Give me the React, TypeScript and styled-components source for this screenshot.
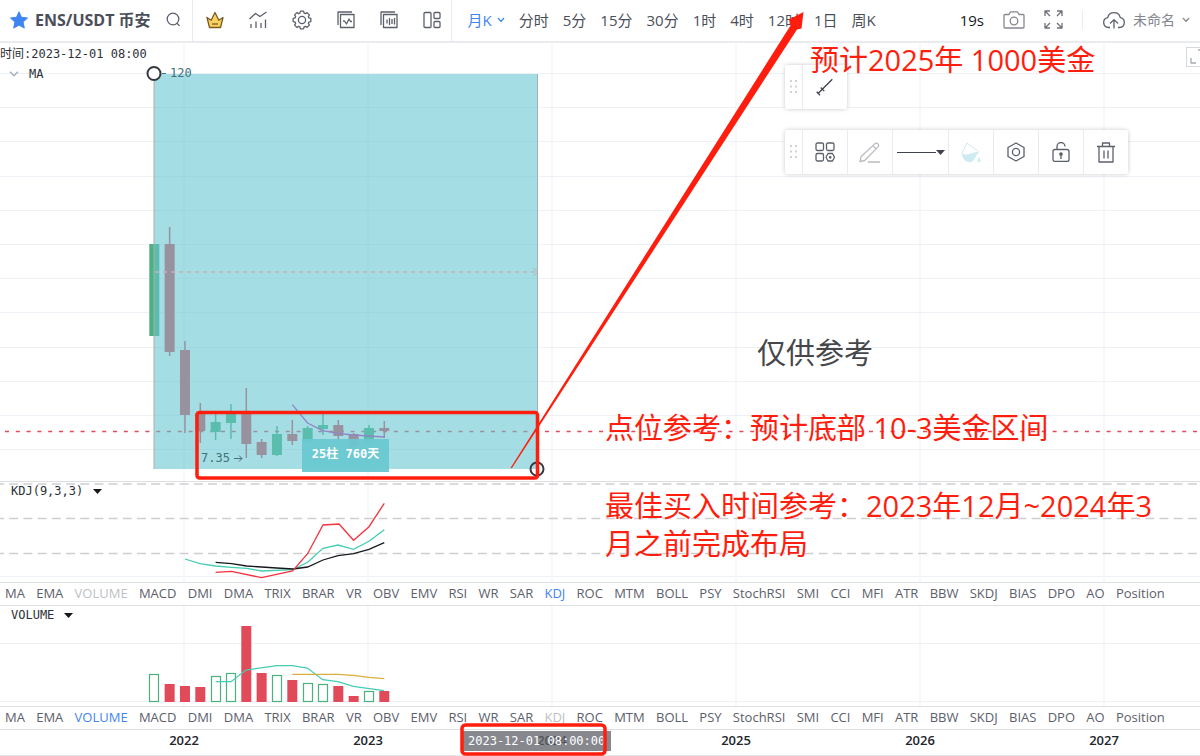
import React from 'react';
import styled, { createGlobalStyle } from 'styled-components';

const sans = `'Open Sans', 'Noto Sans', 'Noto Sans CJK SC', sans-serif`;
const mono = `'DejaVu Sans Mono', 'Noto Sans CJK SC', monospace`;

const GlobalStyle = createGlobalStyle`
  *, *::before, *::after { box-sizing: border-box; }
  body { margin: 0; background: #fff; color: #4a4e59; font-family: ${sans}; overflow-x: hidden; }
  button { font: inherit; color: inherit; background: none; border: 0; padding: 0; margin: 0; cursor: pointer; white-space: nowrap; }
  svg { display: block; }
`;

const Page = styled.div`
  position: relative;
  display: flex;
  flex-direction: column;
  min-height: 100vh;
  overflow: hidden;
`;

const Header = styled.header`
  display: flex;
  align-items: stretch;
  height: 43px;
  border-bottom: 2px solid #e9ebee;
  background: #fff;
`;

const SymbolGroup = styled.div`
  display: flex;
  align-items: center;
  gap: 7px;
  padding: 0 11px 2px 10px;
  border-right: 1px solid #e9ebee;
`;

const SymbolName = styled.button`
  font-size: 16px;
  font-weight: 700;
  line-height: 24px;
`;

const SearchButton = styled.button`
  margin-left: 8px;
`;

const ToolGroup = styled.div`
  display: flex;
  align-items: center;
  gap: 25px;
  padding: 0 10px 2px 13px;
  border-right: 1px solid #e9ebee;
`;

const Periods = styled.nav`
  display: flex;
  align-items: center;
  gap: 14px;
  padding: 0 0 2px 16px;
`;

const Period = styled.button<{ $active?: boolean }>`
  display: flex;
  align-items: center;
  gap: 5px;
  font-size: 15px;
  line-height: 22px;
  color: ${(p) => (p.$active ? '#3f85f2' : '#4a4e59')};
`;

const HeaderEnd = styled.div`
  display: flex;
  align-items: center;
  gap: 19px;
  margin-left: auto;
  padding: 0 10px 2px 0;
`;

const Countdown = styled.span`
  font-size: 15px;
  line-height: 22px;
  color: #16181d;
`;

const Divider = styled.span`
  width: 1px;
  height: 18px;
  background: #e9ebee;
`;

const LayoutName = styled.button`
  display: flex;
  align-items: center;
  gap: 7px;
  font-size: 14px;
  line-height: 22px;
  color: #85888f;
`;

const Pane = styled.section<{ $height: number; $grow?: boolean; $line?: boolean }>`
  position: relative;
  flex: ${(p) => (p.$grow ? '1 0 auto' : '0 0 auto')};
  height: ${(p) => p.$height}px;
  overflow: hidden;
  border-bottom: ${(p) => (p.$line ? '1px solid #dcdfe3' : '0')};
`;

const Plot = styled.svg`
  position: absolute;
  inset: 0;
  width: 100%;
  height: 100%;
`;

const PaneHead = styled.div<{ $inset?: boolean }>`
  position: relative;
  display: flex;
  flex-direction: column;
  align-items: flex-start;
  padding: ${(p) => (p.$inset ? '1px 11px' : '1px 0')};
  font-family: ${mono};
  font-size: 12px;
  line-height: 20px;
  color: #2c3038;
`;

const Legend = styled.button<{ $indent?: boolean }>`
  display: flex;
  align-items: center;
  gap: 10px;
  height: ${(p) => (p.$indent ? 20 : 16)}px;
  padding-left: ${(p) => (p.$indent ? 9 : 0)}px;
`;

const Tabs = styled.nav`
  display: flex;
  align-items: center;
  justify-content: space-between;
  gap: 8px;
  height: 24px;
  padding: 0 35px 2px 5px;
  border-top: 1px solid #dcdfe3;
  border-bottom: 1px solid #dcdfe3;
  background: #fff;
  overflow: hidden;
`;

const Tab = styled.button<{ $state?: string }>`
  font-size: 13px;
  line-height: 20px;
  color: ${(p) => (p.$state === 'on' ? '#3f85f2' : p.$state === 'off' ? '#bdbfc3' : '#5c606b')};
`;

const Axis = styled.footer`
  position: relative;
  display: flex;
  height: 26px;
  padding-left: 92px;
  border-bottom: 1px solid #e4e6ea;
  overflow: hidden;
`;

const Year = styled.span`
  flex: 0 0 184px;
  text-align: center;
  font-size: 13px;
  font-weight: 600;
  line-height: 20px;
  color: #22252c;
`;

const TimeTip = styled.span`
  position: absolute;
  left: 462px;
  top: 1px;
  padding: 0 6px;
  font-family: ${mono};
  font-size: 12px;
  line-height: 20px;
  color: #fff;
  background: rgba(96, 99, 107, 0.76);
`;

const Floating = styled.div<{ $top: number }>`
  position: absolute;
  left: 785px;
  top: ${(p) => p.$top}px;
  display: flex;
  height: 44px;
  background: #fff;
  border-radius: 2px;
  box-shadow: 0 0 4px rgba(0, 0, 0, 0.22);
`;

const Grip = styled.span`
  display: flex;
  align-items: center;
  justify-content: center;
  width: 17px;
`;

const Cell = styled.button<{ $wide?: boolean }>`
  display: flex;
  align-items: center;
  justify-content: center;
  width: ${(p) => (p.$wide ? 56 : 45)}px;
  border-left: 1px solid #e9ebee;
`;

const CornerButton = styled.button`
  position: absolute;
  top: 4px;
  right: -6px;
  width: 20px;
  height: 20px;
  border: 1px solid #d5dae1;
`;

const SpanLabel = styled.div`
  position: absolute;
  left: 302px;
  top: 396px;
  width: 87px;
  height: 33px;
  background: rgba(106, 199, 209, 0.95);
  color: #fff;
  font-family: ${mono};
  font-size: 12px;
  font-weight: 700;
  line-height: 30px;
  text-align: center;
`;

const PriceMark = styled.span<{ $left: number; $top: number }>`
  position: absolute;
  left: ${(p) => p.$left}px;
  top: ${(p) => p.$top}px;
  font-family: ${mono};
  font-size: 12px;
  line-height: 16px;
  color: #42707b;
`;

const Markup = styled.div`
  position: absolute;
  inset: 0;
  pointer-events: none;
`;

const Note = styled.p<{ $left: number; $top: number; $dark?: boolean }>`
  position: absolute;
  left: ${(p) => p.$left}px;
  top: ${(p) => p.$top}px;
  margin: 0;
  white-space: nowrap;
  font-size: 29px;
  line-height: 38px;
  color: ${(p) => (p.$dark ? '#45474b' : '#ff1d0d')};
`;

const RED = '#e04a59';
const GREEN = '#4bb17f';
const STEP = 46 / 3;
const barX = (i: number) => 154.3 + i * STEP;

// [up, high, low, top of body, bottom of body]
const candles: [boolean, number, number, number, number][] = [
  [true, 244, 336, 244, 336],
  [false, 227, 356, 244, 352],
  [false, 341, 433, 350, 415],
  [false, 403, 443, 413, 431],
  [true, 413, 440, 422, 432],
  [true, 404, 439, 413, 423],
  [false, 388, 458, 414, 444],
  [false, 439, 458, 442, 455],
  [true, 426, 456, 434, 455],
  [false, 420, 445, 434, 441],
  [true, 426, 444, 428, 442],
  [true, 414, 435, 425, 429],
  [false, 420, 441, 425, 436],
  [false, 433, 448, 434, 447],
  [true, 425, 446, 428, 442],
  [false, 421, 438, 428, 431],
];

// [up, top of bar]
const volumes: [boolean, number][] = [
  [true, 674], [false, 684], [false, 686], [false, 687],
  [true, 676], [true, 673], [false, 626], [false, 673],
  [true, 675], [false, 680], [true, 683], [true, 684],
  [false, 686], [false, 696], [true, 691], [false, 691],
];

const indicators = [
  'MA', 'EMA', 'VOLUME', 'MACD', 'DMI', 'DMA', 'TRIX', 'BRAR', 'VR', 'OBV', 'EMV', 'RSI', 'WR', 'SAR', 'KDJ',
  'ROC', 'MTM', 'BOLL', 'PSY', 'StochRSI', 'SMI', 'CCI', 'MFI', 'ATR', 'BBW', 'SKDJ', 'BIAS', 'DPO', 'AO', 'Position',
];

const periods = ['分时', '5分', '15分', '30分', '1时', '4时', '12时', '1日', '周K'];
const years = [2022, 2023, 2024, 2025, 2026, 2027];

const Icon = ({ w = 18, h = 18, color = '#5c606b', children }: { w?: number; h?: number; color?: string; children: React.ReactNode }) => (
  <svg width={w} height={h} viewBox={`0 0 ${w} ${h}`} fill="none" stroke={color} strokeWidth="1.3" strokeLinejoin="round" aria-hidden="true">
    {children}
  </svg>
);

const Chevron = ({ color = '#5c606b', wide }: { color?: string; wide?: boolean }) => (
  wide
    ? <Icon w={10} h={6} color={color}><path d="M1 .8l4 4 4-4" /></Icon>
    : <Icon w={8} h={6} color={color}><path d="M1 1l3 3.4L7 1" /></Icon>
);

const Caret = () => (
  <svg width="9" height="5" viewBox="0 0 9 5" aria-hidden="true"><path d="M0 0h9L4.500 5z" fill="#16181d" /></svg>
);

const Dots = () => (
  <svg width="8" height="14" viewBox="0 0 8 14" fill="#cfd2d7" aria-hidden="true">
    {[0, 5.5, 11].map((y) => [0, 5].map((x) => <rect key={`${x}-${y}`} x={x} y={y} width="2" height="2" />))}
  </svg>
);

const VerticalGrid = () => (
  <g stroke="#eef1f5">
    {years.map((y, i) => <line key={y} x1={184 + i * 184} x2={184 + i * 184} y1="0" y2="100%" />)}
  </g>
);

const Hexagon = () => (
  <Icon w={20} h={20}>
    <path d="M10 1l8 4.500v9L10 19l-8-4.500v-9z" />
    <circle cx="10" cy="10" r="3.600" />
  </Icon>
);

const Gear = () => {
  const points: string[] = [];
  for (let i = 0; i < 8; i += 1) {
    const spots: [number, number][] = [[-17, 7.2], [-10, 9], [10, 9], [17, 7.2]];
    spots.forEach(([offset, radius]) => {
      const a = ((i * 45 + offset) * Math.PI) / 180;
      points.push(`${(10 + radius * Math.sin(a)).toFixed(2)},${(10 - radius * Math.cos(a)).toFixed(2)}`);
    });
  }
  return (
    <Icon w={20} h={20}>
      <polygon points={points.join(' ')} />
      <circle cx="10" cy="10" r="3.600" />
    </Icon>
  );
};

const IndicatorTabs = ({ on, off, label }: { on: string; off: string; label: string }) => (
  <Tabs aria-label={label}>
    {indicators.map((name) => (
      <Tab key={name} $state={name === on ? 'on' : name === off ? 'off' : undefined}>{name}</Tab>
    ))}
  </Tabs>
);

const TopBar = () => (
  <Header>
    <SymbolGroup>
      <svg width="18" height="18" viewBox="0 0 18 18" aria-hidden="true">
        <path d="M9 .8l2.500 5.500 6 .7-4.400 4.100 1.200 6L9 14.100l-5.300 3 1.200-6L.5 7l6-.7z" fill="#3f85f2" stroke="#3f85f2" strokeLinejoin="round" />
      </svg>
      <SymbolName>ENS/USDT 币安</SymbolName>
      <SearchButton aria-label="搜索">
        <Icon w={15} h={15}><circle cx="7" cy="7" r="5.800" /><path d="M11 11.300l2.600 2.600" /></Icon>
      </SearchButton>
    </SymbolGroup>
    <ToolGroup>
      <button aria-label="会员">
        <Icon color="#7a5a22">
          <path d="M3.500 16.500L1 6.500l4.200 2.700L9 1.500l3.800 7.700L17 6.500l-2.500 10z" fill="#fbd25f" />
          <path d="M6 13h6" />
        </Icon>
      </button>
      <button aria-label="指标">
        <Icon><path d="M.5 8L6.500 2.500l4.500 3L17.500 1M2 17v-4M7 17v-6.500M12 17v-5M16.500 17V8.500" /></Icon>
      </button>
      <button aria-label="设置"><Gear /></button>
      <button aria-label="图表">
        <Icon><path d="M1 14V1h14M3.500 3.500h13.500v13H3.500zM6 10h1.500l2 3 2.500-5 1.500 2.500H15" /></Icon>
      </button>
      <button aria-label="统计">
        <Icon><path d="M1 14V1h14M3.500 3.500h13.500v13H3.500zM7 8.500v4M9.500 7v7M12 8v5M14.500 7v6.500" /></Icon>
      </button>
      <button aria-label="布局">
        <Icon><rect x="1" y="1.500" width="7" height="15" rx="1" /><rect x="11" y="1.500" width="6" height="6" rx="1" /><rect x="11" y="10.500" width="6" height="6" rx="1" /></Icon>
      </button>
    </ToolGroup>
    <Periods aria-label="周期">
      <Period $active>月K<Chevron color="#3f85f2" /></Period>
      {periods.map((p) => <Period key={p}>{p}</Period>)}
    </Periods>
    <HeaderEnd>
      <Countdown>19s</Countdown>
      <button aria-label="截图">
        <Icon w={22} h={18} color="#85888f">
          <path d="M1 4.500q0-1 1-1h4l1.500-2.700h7L16 3.500h4q1 0 1 1V16q0 1-1 1H2q-1 0-1-1z" /><circle cx="11" cy="10" r="3.800" />
        </Icon>
      </button>
      <button aria-label="全屏">
        <Icon w={19} h={19} color="#6d7078">
          <path d="M6 1H1v5M1 1l5 5M13 1h5v5M18 1l-5 5M1 13v5h5M1 18l5-5M18 13v5h-5M18 18l-5-5" />
        </Icon>
      </button>
      <Divider />
      <LayoutName>
        <Icon w={24} h={18}>
          <path d="M8 16.500H6.500a5 5 0 0 1-.8-9.900 6.500 6.500 0 0 1 12.600 0 5 5 0 0 1-.8 9.900H16M12 17.500V9M8 12.500L12 8.600l4 3.900" />
        </Icon>
        未命名
        <Chevron color="#85888f" />
      </LayoutName>
    </HeaderEnd>
  </Header>
);

const PricePane = () => (
  <Pane $height={439} $grow $line>
    <Plot>
      <g transform="translate(0 -43)">
        <g stroke="#eef1f5">
          {Array.from({ length: 12 }, (_, i) => {
            const y = Math.round(73 + i * 34.200) + 0.5;
            return <line key={i} x1="0" x2="100%" y1={y} y2={y} />;
          })}
        </g>
      </g>
      <VerticalGrid />
      <g transform="translate(0 -43)">
        <line x1="5" x2="100%" y1="431.500" y2="431.500" stroke="#e04a59" strokeWidth="1.500" strokeDasharray="4 6.800" />
        {candles.map(([up, high, low, top, bottom], i) => (
          <g key={i} fill={up ? GREEN : RED}>
            <rect x={barX(i) - 0.75} y={high} width="1.500" height={low - high} />
            <rect x={barX(i) - 5} y={top} width="10" height={bottom - top} />
          </g>
        ))}
        <path d="M162 73.500h4" stroke="#42707b" />
        <rect x="154" y="74" width="384" height="395" fill="rgba(101,197,207,.59)" />
        <polyline points="292.3,404.7 307.5,423 322.7,430.7 338,433.3 353.5,435 384.3,437" fill="none" stroke="#9085c6" strokeWidth="1.300" />
        <path d="M154 74v395M537.500 74v395" stroke="#a9b0b1" />
        <path d="M155 272h380" stroke="#c0b3b8" strokeWidth="1.500" strokeDasharray="4 4" />
        <path d="M533 268l5 4-5 4" fill="none" stroke="#b7b3b8" />
        <path d="M234 458.500h8M239 455.500l3 3-3 3" fill="none" stroke="#42707b" />
        <circle cx="154" cy="73.500" r="6.500" fill="#fff" stroke="#33373e" strokeWidth="2" />
        <circle cx="537" cy="469" r="6.500" fill="none" stroke="#33373e" strokeWidth="2" />
      </g>
    </Plot>
    <PaneHead>
      <span>时间:2023-12-01 08:00</span>
      <Legend $indent><Chevron wide color="#a5abb5" />MA</Legend>
    </PaneHead>
    <PriceMark $left={170} $top={22}>120</PriceMark>
    <PriceMark $left={201} $top={407}>7.35</PriceMark>
    <SpanLabel>25柱 760天</SpanLabel>
    <CornerButton aria-label="展开">
      <Icon color="#a5abb5"><path d="M4 10v5h5M11 2h6" /></Icon>
    </CornerButton>
  </Pane>
);

const KdjPane = () => (
  <Pane $height={100}>
    <Plot>
      <VerticalGrid />
      <line x1="0" x2="100%" y1="94.500" y2="94.500" stroke="#eef1f5" />
      <g stroke="#cfcfd1" strokeWidth="1.500" strokeDasharray="9 5.200" strokeDashoffset="5">
        {[2, 36.500, 71.500].map((y) => <line key={y} x1="0" x2="100%" y1={y} y2={y} />)}
      </g>
      <g transform="translate(0 -482)" fill="none" strokeWidth="1.300">
        <polyline stroke="#45cdb4" points="185,559 200,563.7 215.6,566 231.6,567.3 246.6,568.3 261.6,571 293,569.7 307.6,562.3 323,548.3 338,545 353.6,549.3 369,541.3 384.3,529.7" />
        <polyline stroke="#16181d" points="215.6,562.3 231.6,563.7 246.6,566 276.6,568 293,569 307.6,567 323,560 338,555.7 353.6,553.7 369,549.3 384.3,542.7" />
        <polyline stroke="#f5333f" points="215.6,572.3 231.6,571.3 261.6,577.7 292.6,571 307.6,553.7 323,525 339,524 353.6,540.3 369,526.7 384.3,503.3" />
      </g>
    </Plot>
    <PaneHead $inset><Legend>KDJ(9,3,3)<Caret /></Legend></PaneHead>
  </Pane>
);

const VolumePane = () => (
  <Pane $height={100}>
    <Plot>
      <VerticalGrid />
      <g transform="translate(0 -606)">
        <g stroke="#eef1f5">
          <line x1="0" x2="100%" y1="643.500" y2="643.500" />
          <line x1="0" x2="100%" y1="701.500" y2="701.500" />
        </g>
        {volumes.map(([up, top], i) => (
          up
            ? <rect key={i} x={Math.round(barX(i) - 5) + 0.5} y={top + 0.5} width="9" height={701 - top} fill="#fff" stroke="#4bb17f" strokeWidth="1.200" />
            : <rect key={i} x={barX(i) - 5} y={top} width="10" height={702 - top} fill={RED} />
        ))}
        <polyline fill="none" stroke="#45cdb4" strokeWidth="1.300" points="215.7,681.7 231,681.7 246,670 276.7,665.7 292.3,665.7 307.3,668 322.7,679.7 338,681.7 353.3,686.3 384,690.7" />
        <polyline fill="none" stroke="#d9ae3c" strokeWidth="1.300" points="292.3,674.3 338,674.3 353.3,675.3 369,677.3 384.3,678.7" />
      </g>
    </Plot>
    <PaneHead $inset><Legend>VOLUME<Caret /></Legend></PaneHead>
  </Pane>
);

const DrawingBars = () => (
  <>
    <Floating $top={65}>
      <Grip><Dots /></Grip>
      <Cell aria-label="线段">
        <Icon color="#3f434c"><path d="M2.300 15.300l14-14M.7 13.700L4 17.200M4.700 9.500l3.600 3.600" /></Icon>
      </Cell>
    </Floating>
    <Floating $top={130}>
      <Grip><Dots /></Grip>
      <Cell aria-label="模板">
        <Icon w={20} h={20}>
          <rect x="1" y="1" width="7.500" height="7.500" rx="1.500" /><rect x="11.500" y="1" width="7.500" height="7.500" rx="1.500" /><rect x="1" y="11.500" width="7.500" height="7.500" rx="1.500" />
          <path d="M13 11.500h4.500l2 3.800-2 3.700H13l-2-3.700z" /><circle cx="15.200" cy="15.300" r=".7" />
        </Icon>
      </Cell>
      <Cell aria-label="画笔">
        <Icon w={22} h={21} color="#b9bbbf"><path d="M1 19.500l1-4.700L16 1.600q1.500-1 3 .3 1.300 1.600 0 3L5.700 18.500zM14 3.700l3.200 3.200M9 20h12" /></Icon>
      </Cell>
      <Cell $wide aria-label="线型">
        <svg width="48" height="6" viewBox="0 0 48 6" aria-hidden="true"><path d="M0 3.500h39" stroke="#3f434c" /><path d="M39 1h9l-4.500 5z" fill="#3f434c" /></svg>
      </Cell>
      <Cell aria-label="填充">
        <svg width="20" height="21" viewBox="0 0 20 21" aria-hidden="true">
          <path d="M6 1l11.500 8.500L10.500 19.500Q3 21 1 11z" fill="none" stroke="#cdebf0" />
          <path d="M1 11.500q4 2 8 .3t8.500-1.800L12 19q-9 3.500-11-7.500z" fill="#cdebf0" />
          <path d="M18 15q3 5 0 5.300T18 15z" fill="#cdebf0" />
        </svg>
      </Cell>
      <Cell aria-label="设置"><Hexagon /></Cell>
      <Cell aria-label="锁定">
        <Icon w={18} h={20}><rect x="1" y="7.500" width="16" height="12" rx="2" /><path d="M5 7.500V4.500a4 4 0 0 1 8 0M9 13v4" /><circle cx="9" cy="12" r="1.200" fill="#5c606b" /></Icon>
      </Cell>
      <Cell aria-label="删除">
        <Icon w={18} h={21}><path d="M0 4.500h18M5.500 4.500V1h7v3.500M2 4.500V20h14V4.500M7 8.500v8M11 8.500v8" /></Icon>
      </Cell>
    </Floating>
  </>
);

const HandMarkup = () => (
  <Markup>
    <Plot aria-hidden="true">
      <path d="M510.500 468L790.500 25.500 789 19.500 803.500 12 801.500 28.500 797 29.500 512 468z" fill="#ff1d0d" />
      <g fill="none" stroke="#ff1d0d" strokeWidth="3.500">
        <rect x="197" y="412.500" width="340.500" height="65.500" rx="2.500" />
        <rect x="462" y="725" width="143" height="29" rx="3.500" />
      </g>
    </Plot>
    <Note $left={810} $top={41}>预计2025年 1000美金</Note>
    <Note $left={757} $top={334} $dark>仅供参考</Note>
    <Note $left={605} $top={409}>点位参考：预计底部 10-3美金区间</Note>
    <Note $left={605} $top={487}>最佳买入时间参考：2023年12月~2024年3<br />月之前完成布局</Note>
  </Markup>
);

export default function App() {
  return (
    <>
      <GlobalStyle />
      <Page>
        <TopBar />
        <PricePane />
        <KdjPane />
        <IndicatorTabs label="副图一指标" on="KDJ" off="VOLUME" />
        <VolumePane />
        <IndicatorTabs label="副图二指标" on="VOLUME" off="KDJ" />
        <Axis>
          {years.map((y) => <Year key={y}>{y}</Year>)}
          <TimeTip>2023-12-01 08:00:00</TimeTip>
        </Axis>
        <DrawingBars />
        <HandMarkup />
      </Page>
    </>
  );
}
